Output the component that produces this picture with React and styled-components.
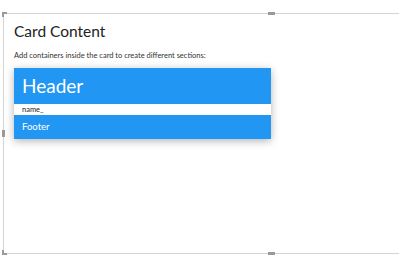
import React from "react"
import styled, { createGlobalStyle } from "styled-components"

const GlobalStyle = createGlobalStyle`
  html, body {
    margin: 0;
    padding: 0;
    background: #ffffff;
  }
  body {
    font-family: Lato, "Open Sans", sans-serif;
  }
`

const Stage = styled.div`
  width: 399px;
  height: 272px;
  overflow: hidden;
  padding: 13px 0 0 3px;
  box-sizing: border-box;
`

const Frame = styled.div`
  position: relative;
  box-sizing: border-box;
  width: 536px;
  height: 241px;
  border: 1px solid #d4d4d4;
  padding: 6px 10px;
`

const Handle = styled.span`
  position: absolute;
  background: #9a9a9a;
  ${({ $side }) =>
    $side === "top"
      ? "top: -2px; left: 264px; width: 7px; height: 3px;"
      : $side === "bottom"
      ? "bottom: -2px; left: 264px; width: 7px; height: 3px;"
      : "left: -2px; top: 116px; width: 3px; height: 7px;"}
`

const Corner = styled.span`
  position: absolute;
  left: -2px;
  width: 5px;
  height: 5px;
  box-sizing: border-box;
  ${({ $pos }) =>
    $pos === "top"
      ? "top: -2px; border-left: 2px solid #9a9a9a; border-top: 2px solid #9a9a9a;"
      : "bottom: -2px; border-left: 2px solid #9a9a9a; border-bottom: 2px solid #9a9a9a;"}
`

const Title = styled.h1`
  margin: 0;
  font-size: 15.5px;
  font-weight: 400;
  line-height: 22px;
  color: #222;
`

const Description = styled.p`
  margin: 8px 0 6px;
  font-size: 7.5px;
  line-height: 12px;
  color: #333;
`

const Card = styled.div`
  width: 257px;
  box-shadow: 0 2px 8px rgba(0, 0, 0, 0.3);
  display: flex;
  flex-direction: column;
`

const Section = styled.div`
  background: ${({ $light }) => ($light ? "#ffffff" : "#2196f3")};
  color: ${({ $light }) => ($light ? "#222" : "#ffffff")};
  padding: 0 8px;
`

const HeaderText = styled.div`
  font-size: 19px;
  line-height: 36px;
  font-weight: 400;
`

const NameText = styled.div`
  font-size: 7.5px;
  line-height: 11px;
`

const FooterText = styled.div`
  font-size: 9.5px;
  line-height: 24px;
`

export default function App() {
  return (
    <>
      <GlobalStyle />
      <Stage>
        <Frame>
          <Corner $pos="top" />
          <Corner $pos="bottom" />
          <Handle $side="top" />
          <Handle $side="bottom" />
          <Handle $side="left" />
          <Title>Card Content</Title>
          <Description>Add containers inside the card to create different sections:</Description>
          <Card>
            <Section>
              <HeaderText>Header</HeaderText>
            </Section>
            <Section $light>
              <NameText>name_</NameText>
            </Section>
            <Section>
              <FooterText>Footer</FooterText>
            </Section>
          </Card>
        </Frame>
      </Stage>
    </>
  )
}
